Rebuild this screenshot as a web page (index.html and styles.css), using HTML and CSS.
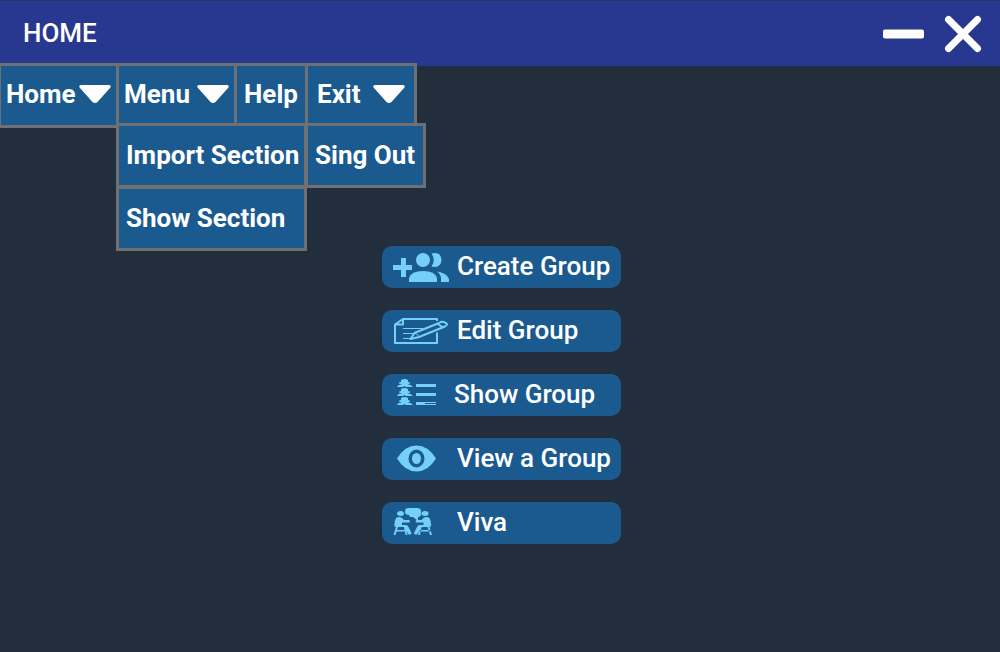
FILE: index.html
```html
<!DOCTYPE html>
<html lang="en">
<head>
<meta charset="utf-8">
<meta name="viewport" content="width=device-width, initial-scale=1">
<title>Home</title>
<link rel="stylesheet" href="styles.css">
</head>
<body>
<header class="titlebar">
  <h1 class="title">HOME</h1>
  <div class="window-controls">
    <button class="window-button" type="button" aria-label="Minimize">
      <svg width="42" height="38" viewBox="0 0 42 38"><rect x="1" y="14.500" width="41" height="9" rx="2"/></svg>
    </button>
    <button class="window-button" type="button" aria-label="Close">
      <svg width="38" height="38" viewBox="0 0 38 38"><path class="cross" d="M4.500 4.500L33.500 33.500M33.500 4.500L4.500 33.500"/></svg>
    </button>
  </div>
</header>
<nav class="menubar" aria-label="Main">
  <div class="menu menu-home">
    <button class="menu-cell" type="button">Home
      <svg class="caret" width="32" height="20" viewBox="0 0 32 20"><path d="M2 1H30Q33 1.500 31 4L18.500 18Q16 20 13.500 18L1 4Q-1 1.500 2 1Z"/></svg>
    </button>
  </div>
  <div class="menu menu-main">
    <button class="menu-cell" type="button" aria-expanded="true">Menu
      <svg class="caret" width="32" height="20" viewBox="0 0 32 20"><path d="M2 1H30Q33 1.500 31 4L18.500 18Q16 20 13.500 18L1 4Q-1 1.500 2 1Z"/></svg>
    </button>
    <div class="dropdown dropdown-main">
      <button class="menu-cell" type="button">Import Section</button>
      <button class="menu-cell" type="button">Show Section</button>
    </div>
  </div>
  <div class="menu menu-help">
    <button class="menu-cell" type="button">Help</button>
  </div>
  <div class="menu menu-exit">
    <button class="menu-cell" type="button" aria-expanded="true">Exit
      <svg class="caret" width="32" height="20" viewBox="0 0 32 20"><path d="M2 1H30Q33 1.500 31 4L18.500 18Q16 20 13.500 18L1 4Q-1 1.500 2 1Z"/></svg>
    </button>
    <div class="dropdown dropdown-exit">
      <button class="menu-cell" type="button">Sing Out</button>
    </div>
  </div>
</nav>
<main class="actions">
  <button class="action" type="button">
    <svg class="icon" width="56" height="32" viewBox="0 0 56 32">
      <path d="M8 7h5v7h6v5h-6v7H8v-7H0v-5h8z"/>
      <circle cx="30" cy="9" r="7"/>
      <path d="M16 31v-4q2-7 14-7t14 7v4z"/>
      <path d="M38.500 2.500q9.500-2 10 6.500-.5 8.500-10 6.500 4.500-6.500 0-13z"/>
      <path d="M44 20.500q10 1.500 12 7.500v3h-8v-4q-.5-4-4-6.500z"/>
    </svg>Create Group
  </button>
  <button class="action" type="button">
    <svg class="icon line" width="56" height="32" viewBox="0 0 56 32">
      <path d="M44 6V4H10L2 9.500V28H44V17.500M10 4V9.500H2"/>
      <path class="rule" d="M10 13.500H30M10 18.500H21M10 23.500H19"/>
      <path d="M21.500 18L46 8Q49 6 52 7.500Q56 9 52 11.500L26 22L17.500 24ZM45 9L50 12.500"/>
      <path class="rule" d="M21.500 18Q25 19 26 22"/>
    </svg>Edit Group
  </button>
  <button class="action" type="button">
    <svg class="icon compact" width="44" height="32" viewBox="0 0 44 32">
      <path d="M8 1Q11.500-1 15 1V3Q17.500 3 17 4.500L14.500 5.500Q19 5.500 19.500 8H13L11.500 7L10 8H4Q4.500 5.500 9 5.500L6 4.500Q5.500 3 8 3Z"/>
      <path d="M8 10Q11.500 8 15 10V12Q17.500 12 17 13.500L14.500 14.500Q19 14.500 19.500 17H13L11.500 16L10 17H4Q4.500 14.500 9 14.500L6 13.500Q5.500 12 8 12Z"/>
      <path d="M8 19Q11.500 17 15 19V21Q17.500 21 17 22.500L14.500 23.500Q19 23.500 19.500 26H13L11.500 25L10 26H4Q4.500 23.500 9 23.500L6 22.500Q5.500 21 8 21Z"/>
      <path d="M23 5h20v3H23zM23 14h20v3H23zM23 23h9v3h-9zM32 23h11v1H32zM32 25h11v1H32z"/>
    </svg>Show Group
  </button>
  <button class="action" type="button">
    <svg class="icon" width="44" height="32" viewBox="0 0 44 32">
      <path fill-rule="evenodd" d="M4 15.500Q12 2.500 23.500 2.500T43 15.500Q35 28.500 23.500 28.500T4 15.500ZM23.500 6.500a8 9 0 1 0 0 18a8 9 0 1 0 0-18z"/>
      <ellipse cx="23.500" cy="15.500" rx="4.500" ry="5.500"/>
    </svg>View a Group
  </button>
  <button class="action" type="button">
    <svg class="icon" width="44" height="32" viewBox="0 0 44 32">
      <path d="M15 1h9q4 0 4 3v3q0 3-3 3v4l-5-4h-3l-1-2q-4 0-4-3 0-4 3-4z"/>
      <ellipse cx="7.500" cy="6.500" rx="3.500" ry="2.500"/><ellipse cx="32" cy="6.500" rx="3.500" ry="2.500"/>
      <path d="M3 11Q6 9 9 11l2 2h5q2 1.500 0 2.500H9v2.500h4q2 0 3 3l2.500 5q0 1.500-3 1.500L11 20H3.500Q0 17 3 11z"/>
      <path d="M36.500 11Q33.500 9 30.500 11l-2 2h-5q-2 1.500 0 2.500h7v2.500h-4q-2 0-3 3L21 26q0 1.500 3 1.500l4.500-7.500H36q3.500-3 .5-9z"/>
      <path d="M3 20h2l-2.500 8h-2zM11 20h1.500l2 8h-2zM2 23h11v1.500H2zM36.500 20h-2l2.500 8h2zM28.500 20H27l-2 8h2zM26.500 23h11v1.500h-11zM1 17h1.500l.5 3H2zM37 17h1.500l-1 3h-1z"/>
    </svg>Viva
  </button>
</main>
</body>
</html>
```
FILE: styles.css
```css
* {
  box-sizing: border-box;
}

body {
  margin: 0;
  min-height: 100vh;
  overflow-x: hidden;
  background: #232e3d;
  color: #fff;
  font-family: Roboto, "Liberation Sans", sans-serif;
  font-size: 26px;
  line-height: 32px;
}

button {
  margin: 0;
  color: inherit;
  font: inherit;
  text-align: left;
  white-space: nowrap;
  cursor: pointer;
}

svg {
  flex: none;
  fill: currentColor;
}

.titlebar {
  display: flex;
  align-items: center;
  justify-content: space-between;
  height: 66px;
  padding: 0 18px 0 23px;
  border-top: 1px solid #253561;
  background: #283890;
}

.title {
  margin: 0;
  padding-bottom: 2px;
  font-size: 26px;
  font-weight: 500;
}

.window-controls {
  display: flex;
  gap: 20px;
}

.window-button {
  display: flex;
  padding: 0;
  border: 0;
  background: none;
}

.cross {
  fill: none;
  stroke: currentColor;
  stroke-width: 7px;
  stroke-linecap: round;
}

.menubar {
  display: flex;
  margin: -3px 0 0 -2px;
}

.menu {
  position: relative;
}

.menu + .menu {
  margin-left: -3px;
}

.menu-home,
.menu-main {
  width: 121px;
}

.menu-help {
  width: 74px;
}

.menu-exit {
  width: 112px;
}

.menu-cell {
  display: flex;
  align-items: center;
  justify-content: space-between;
  width: 100%;
  height: 65px;
  padding: 0 5px 3px;
  border: 3px solid #6e7074;
  background: #1b5a8f;
  font-weight: 700;
}

.menu-help .menu-cell {
  padding-left: 7px;
}

.menu-exit .menu-cell {
  padding: 0 9px 3px;
}

.dropdown {
  position: absolute;
  top: 60px;
  left: 0;
  z-index: 1;
}

.dropdown .menu-cell {
  padding: 0 7px 2px;
}

.dropdown .menu-cell + .menu-cell {
  margin-top: -2px;
}

.dropdown-main {
  width: 191px;
}

.dropdown-exit {
  width: 121px;
}

.actions {
  display: flex;
  flex-direction: column;
  align-items: center;
  gap: 22px;
  padding: 118px 0 24px 3px;
}

.action {
  display: flex;
  align-items: center;
  width: 239px;
  height: 42px;
  padding: 0 0 2px 11px;
  border: 0;
  border-radius: 10px;
  background: #1b5a8f;
  font-weight: 500;
}

.icon {
  margin-top: 2px;
  margin-right: 8px;
  color: #74d0f7;
}

.icon[width="44"] {
  margin-right: 20px;
}

.icon.compact {
  margin-right: 17px;
}

.line {
  fill: none;
  stroke: currentColor;
  stroke-width: 2px;
  stroke-linejoin: round;
}

.rule {
  stroke-width: 1px;
}
```
